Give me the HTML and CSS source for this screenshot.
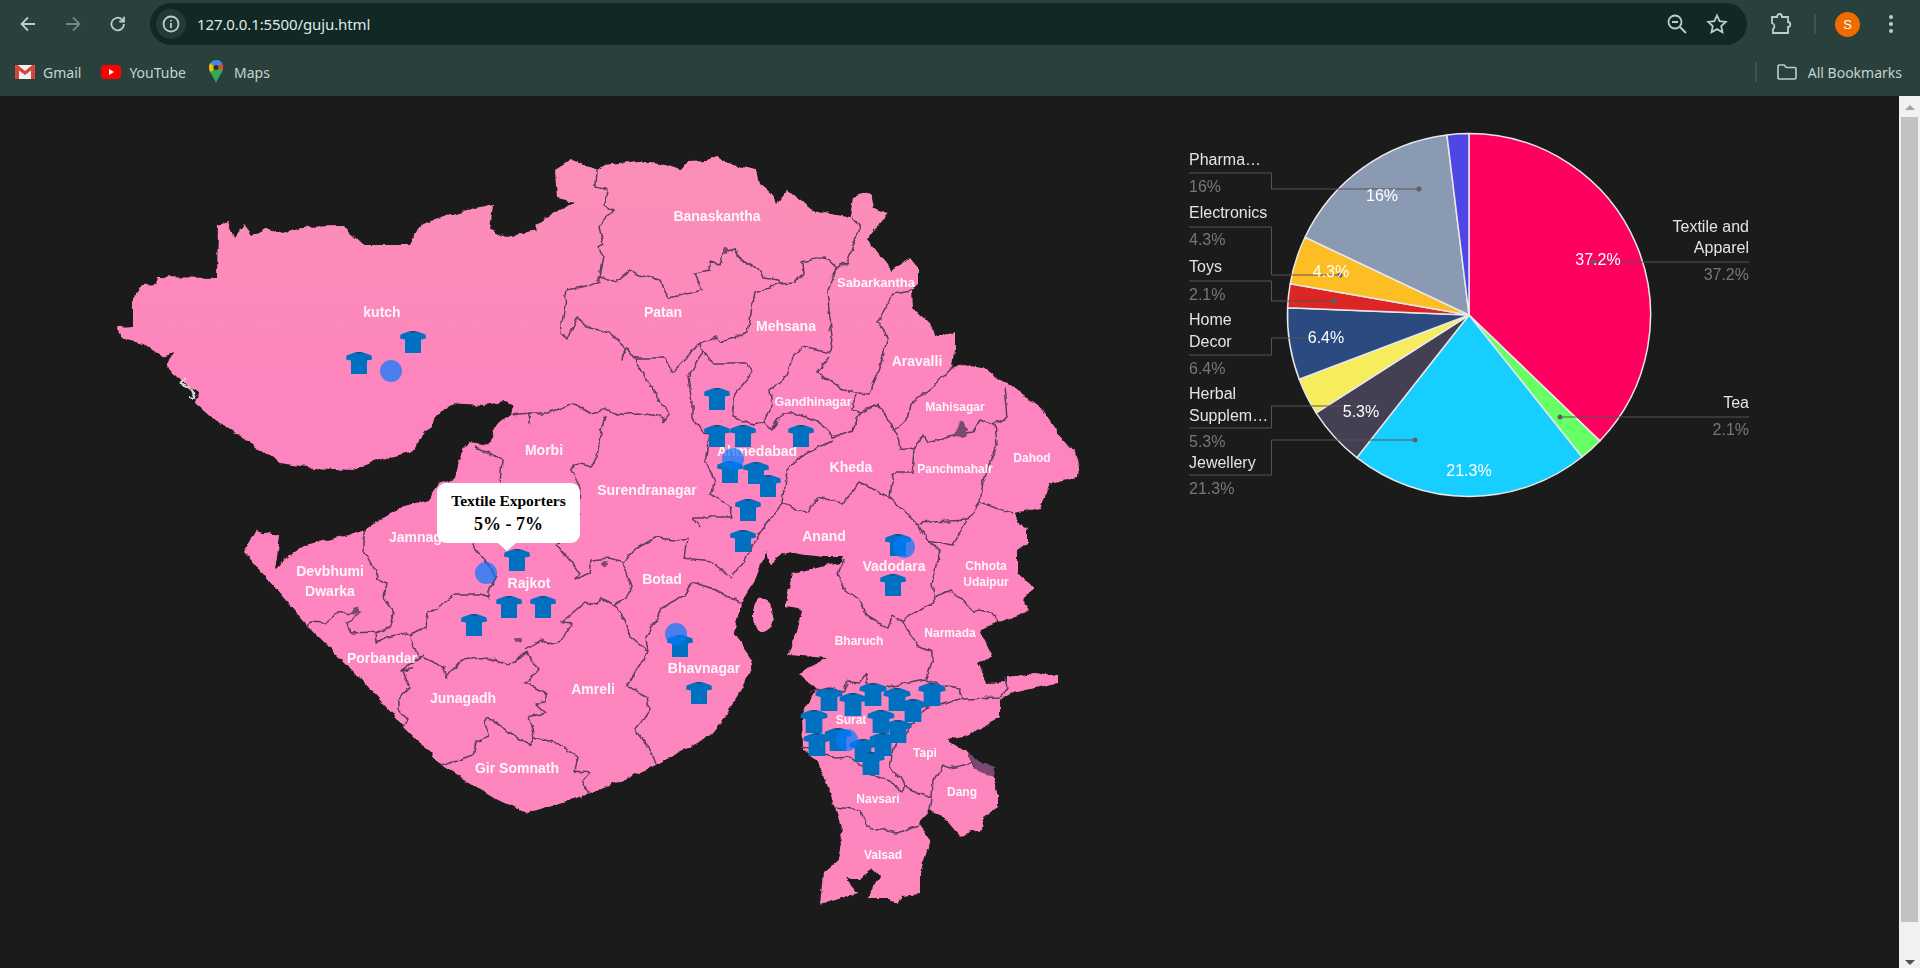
FILE: index.html
```html
<!DOCTYPE html>
<html lang="en">

<head>
    <meta charset="UTF-8">
    <meta name="viewport" content="width=device-width, initial-scale=1.0">
    <title>guju</title>
    <link rel="stylesheet" href="styles.css">
</head>

<body>
    <header class="browser">
        <div class="toolbar">
            <button class="navBtn"><svg width="20" height="20" viewBox="0 0 20 20"><path d="M17 10H4M10 3.500 3.500 10l6.500 6.500" /></svg></button>
            <button class="navBtn dim"><svg width="20" height="20" viewBox="0 0 20 20"><path d="M3 10h13M10 3.500l6.500 6.500-6.500 6.500" /></svg></button>
            <button class="navBtn"><svg width="20" height="20" viewBox="0 0 20 20"><path d="M16 10a6.300 6.300 0 1 1-1.900-4.500L16 7.300M16 2.800v4.700h-4.700" /></svg></button>
            <div class="urlBox">
                <span class="siteInfo"><svg width="20" height="20" viewBox="0 0 20 20"><circle cx="10" cy="10" r="7.500" /><path d="M10 9v5M10 6v1.600" /></svg></span>
                <span class="urlText">127.0.0.1:5500/guju.html</span>
                <span class="urlIcons">
                    <svg width="22" height="22" viewBox="0 0 22 22"><circle cx="9" cy="9" r="6.500" /><path d="M6 9h6M14 14l6 6" /></svg>
                    <svg width="22" height="22" viewBox="0 0 22 22"><path d="M11 2.500l2.600 5.700 6.200.7-4.600 4.200 1.300 6.100-5.500-3.100-5.500 3.100 1.300-6.100L2.200 8.900l6.200-.7z" /></svg>
                </span>
            </div>
            <svg class="extIcon" width="22" height="24" viewBox="0 0 22 24"><path d="M2 5h5c0-4 5-4 5 0h6v5c3 0 3 5 0 5v6H3v-4c2-1 2-5-1-6z" /></svg>
            <span class="toolSep"></span>
            <span class="avatar">S</span>
            <span class="menuDots"><i></i><i></i><i></i></span>
        </div>
        <nav class="bookmarks">
            <a class="mark"><svg class="logo" width="20" height="16" viewBox="0 0 20 16"><rect y="1" width="20" height="14" rx="1.500" fill="#f2f2f2" /><path d="M0 2.500v11.500c0 .6.400 1 1 1h3V6.500l6 4.500 6-4.500V15h3c.6 0 1-.4 1-1V2.500c0-1.500-1.800-2-3-1.200L10 7 3 1.300C1.800.5 0 1 0 2.500z" fill="#d6443a" /></svg>Gmail</a>
            <a class="mark"><svg class="logo" width="20" height="16" viewBox="0 0 20 16"><rect y="1" width="20" height="14" rx="4" fill="#f00" /><path d="M8 5l5 3-5 3z" fill="#fff" /></svg>YouTube</a>
            <a class="mark maps"><svg class="logo" width="14" height="24" viewBox="0 0 14 24"><path d="M7 23C5 17 0 13 0 7.500 0 3 3 0 7 0s7 3 7 7.500C14 13 9 17 7 23z" fill="#34a853" /><path d="M1 3.500 7 0c3 0 5 1 6 3L9.500 7 4 6z" fill="#4285f4" /><path d="M0 7.500C0 6 .4 4.800 1 3.500L5 6c-.6.800-.8 2.500 0 3.500L1.500 12C.5 10.500 0 9 0 7.500z" fill="#fbbc04" /><path d="M13 3c.7 1.300 1 3 1 4.500 0 1-.2 2-.6 3L9 7z" fill="#ea4335" /><circle cx="7" cy="7.500" r="2.500" fill="#3c2f10" /></svg>Maps</a>
            <span class="markSep"></span>
            <a class="mark allMarks"><svg width="20" height="16" viewBox="0 0 20 16"><path d="M1 14.500V2.300c0-.7.500-1.300 1.200-1.300h5l2 2.500h8.600c.7 0 1.200.600 1.200 1.300v9c0 .7-.5 1.200-1.200 1.200H2.200c-.7 0-1.200-.500-1.200-.500z" /></svg>All Bookmarks</a>
        </nav>
    </header>

    <main class="page">
        <div class="content">
            <!-- Gujarat district map -->
            <svg class="mapSvg" width="1150" height="872" viewBox="0 96 1150 872">
                <defs>
                    <linearGradient id="mapFill" gradientUnits="userSpaceOnUse" x1="600" y1="160" x2="600" y2="900">
                        <stop offset="0" stop-color="#fb8fb7" />
                        <stop offset="0.35" stop-color="#fe84bf" />
                        <stop offset="1" stop-color="#fd86bd" />
                    </linearGradient>
                    <filter id="rough" x="0" y="0" width="100%" height="100%" filterUnits="objectBoundingBox">
                        <feTurbulence type="fractalNoise" baseFrequency="0.09" numOctaves="3" seed="4" result="noise" />
                        <feDisplacementMap in="SourceGraphic" in2="noise" scale="6" xChannelSelector="R" yChannelSelector="G" />
                        <feGaussianBlur stdDeviation="0.35" />
                    </filter>
                    <symbol id="shirt" viewBox="0 0 26 22">
                        <path d="M8 .8C10 0 16 0 18 .8L25.500 3.500 26 7.500 21 8.500V22H5V8.500L0 7.500 .5 3.500z" fill="#0070c0" />
                        <path d="M9 .7c2.500 1 5.500 1 8 0-2.500-.5-5.500-.5-8 0z" fill="#123e6e" />
                    </symbol>
                </defs>

                <g class="roughMap">
                    <!-- Kutch + mainland outline -->
                    <path class="land" d="M117 328 133 327 133 297 142 286 154 285 157 277 217 278 218 225 228 222 234 238 244 224 253 236 267 228 282 233 301 227 343 226 363 245 410 245 421 224 467 210 493 204 490 230 506 237 538 230 536 225 555 212 575 202 557 198 555 170 571 160 597 170 605 165 636 161 660 163 680 170 688 161 707 160 717 156 733 165 757 170 760 183 772 193 777 203 787 190 812 210 850 218 853 197 870 192 873 208 888 213 868 240 892 270 910 257 918 267 918 285 912 290 913 308 933 327 935 337 955 332 955 350 953 367 963 365 983 368 1000 380 1008 383 1043 410 1063 440 1080 460 1077 477 1050 483 1040 507 1015 513 1017 520 1027 530 1027 543 1017 550 1017 573 1035 588 1023 600 1030 610 998 622 980 630 993 657 977 663 987 683 1007 682 1007 677 1033 673 1057 675 1057 683 1013 693 1000 700 1000 717 977 730 963 737 947 740 968 753 973 767 993 773 998 793 998 807 983 817 982 830 960 835 947 820 930 810 918 823 930 840 920 873 920 893 902 895 897 905 888 898 867 898 880 877 872 868 860 880 845 878 857 893 820 905 823 873 838 860 843 833 835 807 817 760 803 750 802 713 817 690 800 673 810 667 828 658 788 655 803 610 785 607 792 573 840 563 843 557 823 557 783 552 770 565 766 552 755 580 741 603 734 633 753 660 744 687 723 720 709 737 659 763 630 777 587 795 526 813 498 800 444 767 405 728 362 680 309 627 244 552 257 530 280 537 275 570 289 555 305 545 348 535 362 530 401 508 430 500 437 483 455 478 462 450 470 442 488 445 498 423 511 415 513 405 504 402 483 405 450 403 437 417 410 452 379 460 353 470 314 468 280 463 253 445 215 420 196 403 198 393 180 380 167 367 173 353 163 357 142 343 123 338z" />
                    <path class="land" d="M760 599C770 597 775 607 773 618 772 628 765 635 758 631 752 625 750 605 760 599z" />

                    <!-- district borders -->
                    <g class="borders">
                        <path d="M597 170 596 187 607 190 605 205 613 210 599 227 603 243 598 247 603 257 599 277 617 283 628 270 640 275 660 280 668 298 702 290 695 273 710 270 710 262 720 265 723 253 735 250 738 258 760 270 763 278 778 280 780 284 795 283 803 273 802 262 825 257 837 268 847 263 860 227 852 218" />
                        <path d="M599 277 599 283 567 290 563 317 561 333 567 340 578 317 586 327 609 332 624 347 622 360 626 347 634 358 665 358 673 372 700 343 717 337 720 342 748 332 752 307 755 293 780 284" />
                        <path d="M635 357 645 377 655 393 660 403 670 413 663 422 663 417 640 413 617 415 605 410 590 413 573 403 548 413 530 413 530 423 529 413 511 415" />
                        <path d="M700 343 702 353 708 357 713 363 748 363 752 372 735 393 732 417 753 425 763 423" />
                        <path d="M702 353 688 377 692 403 692 417 703 432 710 433 705 460 715 483 710 493 730 507 733 517 693 517 700 528" />
                        <path d="M837 268 827 290 832 337 830 353 802 347 793 357 785 378 770 390 772 407 763 423 770 430 783 413 793 413 820 423 833 437 853 430 860 413 853 410 855 392 843 390 817 373 830 357" />
                        <path d="M913 290 893 293 877 322 888 337 883 357 877 375 870 393 855 392" />
                        <path d="M860 413 878 405 895 430 897 433 900 448 915 450 923 435 927 442 953 435 973 432 980 420 993 425 1008 417 1005 387" />
                        <path d="M953 367 933 387 910 405 907 420 895 430" />
                        <path d="M995 425 997 443 983 483 980 503 1013 513" />
                        <path d="M915 450 913 473 893 473 890 497 860 483 843 503 817 497 807 513 790 508 783 503 787 470 800 457 833 440" />
                        <path d="M783 503 762 528 745 560 733 575" />
                        <path d="M890 497 917 523 967 520 980 503" />
                        <path d="M917 523 927 540 940 550 932 583 935 603 910 615 903 622 893 615 888 628 867 615 860 600 842 587 838 573 843 560" />
                        <path d="M967 520 953 545 927 540" />
                        <path d="M935 598 950 590 960 598 973 610 990 613 998 622" />
                        <path d="M903 622 907 630 920 647 932 652 932 663 925 680 940 685 960 688 963 698 940 705 927 707 893 747 890 767 903 780 905 787 920 793 932 797 930 810" />
                        <path d="M963 699 1000 698 1007 688 1005 678" />
                        <path d="M925 680 887 687 867 683 867 673 860 683 848 682 843 692 830 688 810 692" />
                        <path d="M802 747 823 755 837 758 850 757 872 775 893 782 902 793 905 787" />
                        <path d="M932 797 933 780 942 765 950 768 973 763" />
                        <path d="M835 807 860 810 868 827 897 833 918 825" />
                        <!-- saurashtra -->
                        <path d="M475 447 502 460 500 483 473 545 487 563 496 577 489 587 489 598 480 595 455 595 437 608 428 613 426 627 410 635 407 633 387 637 376 643 375 632 350 633 346 623 362 612 337 613 325 623 310 622 308 628" />
                        <path d="M364 530 364 550 375 570 378 580 387 583 384 597 394 613 391 627 376 633" />
                        <path d="M605 417 601 430 597 457 592 467 575 463 571 470 580 487 578 517 557 545 567 557 580 573 575 580 589 573 591 560 609 558 623 562 634 550 655 538 676 540 687 538 684 558 694 560 712 562 732 578" />
                        <path d="M623 563 632 587 626 598 614 605 601 597 598 605 585 602 562 622 571 623 562 640 551 645 541 640 526 650" />
                        <path d="M410 637 418 657 425 658 444 667 446 678 462 660 487 657 509 665 519 657 528 652" />
                        <path d="M614 605 625 620 630 637 648 652 637 670 628 685 634 690 648 697 650 710 635 730 650 750 655 763" />
                        <path d="M741 603 709 587 692 582 684 595 662 607 655 623 646 637 648 653" />
                        <path d="M526 652 539 670 526 682 546 693 546 702 535 703 546 713 528 717 534 737 530 745 517 737 487 718 484 723 489 737 476 742 473 755 441 765" />
                        <path d="M534 737 557 743 578 757 575 770 589 772 582 780 589 795" />
                        <path d="M425 655 400 670 412 668 403 670 410 688 398 700 398 710 407 720 403 728" />
                    </g>

                    <!-- small water patches on the map image -->
                    <path class="patch" d="M953 437 960 421 968 428 966 438z" />
                    <path class="patch" d="M968 752 980 762 994 767 993 776 978 771 972 764z" />
                    <circle class="patch" cx="356" cy="610" r="4" />
                    <circle class="patch" cx="605" cy="564" r="3" />
                    <circle class="patch" cx="519" cy="640" r="3" />
                    <circle class="patch" cx="726" cy="251" r="3" />
                    <path class="paleLine" d="M186 379 180 384 190 388 194 397 188 396" />
                </g>

                <g class="districtNames">
                    <text x="382" y="317">kutch</text>
                    <text x="717" y="221">Banaskantha</text>
                    <text x="663" y="317">Patan</text>
                    <text x="876" y="287" class="sm">Sabarkantha</text>
                    <text x="786" y="331">Mehsana</text>
                    <text x="917" y="366">Aravalli</text>
                    <text x="813" y="406" class="gn">Gandhinagar</text>
                    <text x="955" y="411" class="xs">Mahisagar</text>
                    <text x="757" y="456">Ahmedabad</text>
                    <text x="851" y="472">Kheda</text>
                    <text x="955" y="473" class="xs">Panchmahalr</text>
                    <text x="1032" y="462" class="xs">Dahod</text>
                    <text x="647" y="495">Surendranagar</text>
                    <text x="544" y="455">Morbi</text>
                    <text x="422" y="542">Jamnagar</text>
                    <text x="330" y="576">Devbhumi</text>
                    <text x="330" y="596">Dwarka</text>
                    <text x="529" y="588">Rajkot</text>
                    <text x="662" y="584">Botad</text>
                    <text x="382" y="663">Porbandar</text>
                    <text x="463" y="703">Junagadh</text>
                    <text x="593" y="694">Amreli</text>
                    <text x="704" y="673">Bhavnagar</text>
                    <text x="517" y="773">Gir Somnath</text>
                    <text x="824" y="541">Anand</text>
                    <text x="894" y="571">Vadodara</text>
                    <text x="986" y="570" class="xs">Chhota</text>
                    <text x="986" y="586" class="xs">Udaipur</text>
                    <text x="859" y="645" class="xs">Bharuch</text>
                    <text x="950" y="637" class="xs">Narmada</text>
                    <text x="851" y="724" class="xs">Surat</text>
                    <text x="925" y="757" class="xs">Tapi</text>
                    <text x="878" y="803" class="xs">Navsari</text>
                    <text x="962" y="796" class="xs">Dang</text>
                    <text x="883" y="859" class="xs">Valsad</text>
                </g>

                <use href="#shirt" x="346" y="352" width="26" height="22" />
                <use href="#shirt" x="400" y="331" width="26" height="22" />
                <use href="#shirt" x="704" y="388" width="26" height="22" />
                <use href="#shirt" x="704" y="425" width="26" height="22" />
                <use href="#shirt" x="730" y="425" width="26" height="22" />
                <use href="#shirt" x="788" y="425" width="26" height="22" />
                <use href="#shirt" x="717" y="461" width="26" height="22" />
                <use href="#shirt" x="743" y="462" width="26" height="22" />
                <use href="#shirt" x="755" y="475" width="26" height="22" />
                <use href="#shirt" x="735" y="499" width="26" height="22" />
                <use href="#shirt" x="730" y="530" width="26" height="22" />
                <use href="#shirt" x="504" y="549" width="26" height="22" />
                <use href="#shirt" x="496" y="596" width="26" height="22" />
                <use href="#shirt" x="530" y="596" width="26" height="22" />
                <use href="#shirt" x="461" y="614" width="26" height="22" />
                <use href="#shirt" x="667" y="635" width="26" height="22" />
                <use href="#shirt" x="686" y="682" width="26" height="22" />
                <use href="#shirt" x="880" y="574" width="26" height="22" />
                <use href="#shirt" x="885" y="534" width="26" height="22" />
                <use href="#shirt" x="815" y="688" width="28" height="23" />
                <use href="#shirt" x="839" y="693" width="28" height="23" />
                <use href="#shirt" x="859" y="683" width="28" height="23" />
                <use href="#shirt" x="883" y="688" width="28" height="23" />
                <use href="#shirt" x="918" y="683" width="28" height="23" />
                <use href="#shirt" x="899" y="699" width="28" height="23" />
                <use href="#shirt" x="800" y="710" width="28" height="23" />
                <use href="#shirt" x="867" y="710" width="28" height="23" />
                <use href="#shirt" x="884" y="720" width="28" height="23" />
                <use href="#shirt" x="803" y="733" width="28" height="23" />
                <use href="#shirt" x="824" y="728" width="28" height="23" />
                <use href="#shirt" x="869" y="733" width="28" height="23" />
                <use href="#shirt" x="849" y="739" width="28" height="23" />
                <use href="#shirt" x="857" y="752" width="28" height="23" />

                <g class="dots">
                    <circle cx="391" cy="371" r="11" />
                    <circle cx="733" cy="459" r="11" />
                    <circle cx="486" cy="573" r="11" />
                    <circle cx="676" cy="634" r="11" />
                    <circle cx="904" cy="547" r="11" />
                    <circle cx="847" cy="740" r="11" />
                </g>
            </svg>

            <div class="tip">
                <div class="tipTitle">Textile Exporters</div>
                <div class="tipRange">5% - 7%</div>
            </div>

            <!-- export share pie -->
            <svg class="pieSvg" width="749" height="872" viewBox="1150 96 749 872">
                <g class="slices">
                    <path fill="#ff0060" d="M1469 315V133.500A181.500 181.500 0 0 1 1599.800 440.900z" />
                    <path fill="#66ff66" d="M1469 315 1599.800 440.900A181.500 181.500 0 0 1 1582 457z" />
                    <path fill="#16ceff" d="M1469 315 1582 457A181.500 181.500 0 0 1 1356.800 457.600z" />
                    <path fill="#443f52" d="M1469 315 1356.800 457.600A181.500 181.500 0 0 1 1316.100 412.800z" />
                    <path fill="#f7ec5c" d="M1469 315 1316.100 412.800A181.500 181.500 0 0 1 1299.200 379.200z" />
                    <path fill="#2b4a7f" d="M1469 315 1299.200 379.200A181.500 181.500 0 0 1 1287.600 307.700z" />
                    <path fill="#dc2626" d="M1469 315 1287.600 307.700A181.500 181.500 0 0 1 1290.200 283.800z" />
                    <path fill="#fdbd24" d="M1469 315 1290.200 283.800A181.500 181.500 0 0 1 1305 237.200z" />
                    <path fill="#8a9ab3" d="M1469 315 1305 237.200A181.500 181.500 0 0 1 1446.900 134.900z" />
                    <path fill="#4f46e5" d="M1469 315 1446.900 134.900A181.500 181.500 0 0 1 1469 133.500z" />
                </g>
                <g class="leaders">
                    <path d="M1189 173H1271.500V189H1419" />
                    <path d="M1189 227H1271.500V275H1340" />
                    <path d="M1189 281H1271.500V301H1334" />
                    <path d="M1189 355H1271.500V338H1308" />
                    <path d="M1189 428H1271.500V406H1357" />
                    <path d="M1189 475H1271.500V440H1415" />
                    <path d="M1749 262H1594" />
                    <path d="M1749 417H1560" />
                </g>
                <g class="leaderDots">
                    <circle cx="1419" cy="189" r="2.500" />
                    <circle cx="1340" cy="275" r="2.500" />
                    <circle cx="1334" cy="301" r="2.500" />
                    <circle cx="1594" cy="262" r="2.500" />
                    <circle cx="1560" cy="417" r="2.500" />
                    <circle cx="1415" cy="440" r="2.500" />
                </g>
                <g class="sliceText">
                    <text x="1598" y="265">37.2%</text>
                    <text x="1382" y="201">16%</text>
                    <text x="1331" y="277">4.3%</text>
                    <text x="1326" y="343">6.4%</text>
                    <text x="1361" y="417">5.3%</text>
                    <text x="1469" y="476">21.3%</text>
                </g>
                <g class="legendName">
                    <text x="1189" y="165">Pharma…</text>
                    <text x="1189" y="218">Electronics</text>
                    <text x="1189" y="272">Toys</text>
                    <text x="1189" y="325">Home</text>
                    <text x="1189" y="347">Decor</text>
                    <text x="1189" y="399">Herbal</text>
                    <text x="1189" y="421">Supplem…</text>
                    <text x="1189" y="468">Jewellery</text>
                </g>
                <g class="legendValue">
                    <text x="1189" y="192">16%</text>
                    <text x="1189" y="245">4.3%</text>
                    <text x="1189" y="300">2.1%</text>
                    <text x="1189" y="374">6.4%</text>
                    <text x="1189" y="447">5.3%</text>
                    <text x="1189" y="494">21.3%</text>
                </g>
                <g class="legendName endSide">
                    <text x="1749" y="232">Textile and</text>
                    <text x="1749" y="253">Apparel</text>
                    <text x="1749" y="408">Tea</text>
                </g>
                <g class="legendValue endSide">
                    <text x="1749" y="280">37.2%</text>
                    <text x="1749" y="435">2.1%</text>
                </g>
            </svg>
        </div>

        <div class="scrollbar">
            <span class="arrowUp"></span>
            <span class="thumb"></span>
            <span class="arrowDown"></span>
        </div>
    </main>
</body>

</html>
```

FILE: styles.css
```css
body {
    margin: 0;
    height: 968px;
    overflow: hidden;
    display: flex;
    flex-direction: column;
    background-color: #1b1b1b;
    font-family: "Liberation Sans", Arial, sans-serif;
}

/* browser frame */
.browser {
    height: 96px;
    flex: none;
    background-color: #2a403d;
    color: #c5d3d0;
}

.browser svg {
    fill: none;
    stroke: #bccdca;
    stroke-width: 1.8;
    display: block;
}

.toolbar {
    height: 48px;
    display: flex;
    align-items: center;
}

.navBtn {
    width: 45px;
    height: 36px;
    padding: 0;
    flex: none;
    display: flex;
    align-items: center;
    justify-content: center;
    background: none;
    border: none;
    margin-top: -1px;
}

.navBtn:first-child {
    margin-left: 5px;
}

.navBtn.dim svg {
    stroke: #72857f;
}

.urlBox {
    width: 1597px;
    height: 42px;
    margin-left: 10px;
    display: flex;
    align-items: center;
    flex: none;
    background-color: #122825;
    border-radius: 21px;
}

.siteInfo {
    width: 30px;
    height: 30px;
    margin-left: 6px;
    display: flex;
    align-items: center;
    justify-content: center;
    background-color: #243a37;
    border-radius: 50%;
}

.urlText {
    margin-left: 11px;
    font-family: "Noto Sans", sans-serif;
    font-size: 15px;
    color: #dfe9e7;
    letter-spacing: -0.1px;
}

.urlIcons {
    margin-left: auto;
    margin-right: 19px;
    display: flex;
    gap: 18px;
}

.extIcon {
    margin-left: 23px;
    flex: none;
}

.toolSep {
    width: 2px;
    height: 20px;
    margin-left: 22px;
    background-color: #3e5552;
    flex: none;
}

.avatar {
    width: 25px;
    height: 25px;
    margin-left: 19px;
    flex: none;
    display: flex;
    align-items: center;
    justify-content: center;
    background-color: #f06c00;
    border-radius: 50%;
    color: #fff;
    font-size: 13px;
}

.menuDots {
    margin-left: 29px;
    display: flex;
    flex-direction: column;
    gap: 3px;
}

.menuDots i {
    width: 4px;
    height: 4px;
    background-color: #bccdca;
    border-radius: 50%;
}

.bookmarks {
    height: 48px;
    display: flex;
    align-items: center;
    font-family: "Noto Sans", sans-serif;
    font-size: 14px;
    padding-left: 15px;
}

.mark {
    display: flex;
    align-items: center;
    gap: 8px;
    margin-right: 20px;
}

.mark.maps {
    margin-left: 3px;
    gap: 11px;
}

.browser svg.logo {
    stroke: none;
}

.browser .allMarks svg {
    stroke-width: 1.6;
}

.markSep {
    width: 2px;
    height: 20px;
    margin-left: auto;
    margin-right: 20px;
    background-color: #3e5552;
}

.mark.allMarks {
    gap: 11px;
    margin-right: 18px;
}

/* page */
.page {
    flex: 1;
    display: flex;
    min-height: 0;
}

.content {
    position: relative;
    flex: 1;
    display: flex;
}

.mapSvg,
.pieSvg {
    display: block;
    flex: none;
}

.roughMap {
    filter: url(#rough);
}

.land {
    fill: url(#mapFill);
}

.borders path {
    fill: none;
    stroke: #5b3d5f;
    stroke-width: 1.5;
    stroke-linejoin: round;
}

.patch {
    fill: #7a4a72;
}

.paleLine {
    fill: none;
    stroke: #d9d6dc;
    stroke-width: 2;
}

.districtNames text {
    fill: #fff;
    font-size: 14px;
    font-weight: bold;
    text-anchor: middle;
    opacity: 0.93;
    filter: blur(0.3px);
}

.districtNames .sm {
    font-size: 13px;
}

.districtNames .gn {
    font-size: 12.5px;
}

.districtNames .xs {
    font-size: 12px;
}

.dots circle {
    fill: rgb(0, 122, 255);
    opacity: 0.7;
}

/* popup over the Rajkot marker */
.tip {
    position: absolute;
    left: 437px;
    top: 387px;
    width: 143px;
    height: 60px;
    box-sizing: border-box;
    padding-top: 8px;
    background-color: #fff;
    border-radius: 9px;
    color: #000;
    font-family: "Liberation Serif", "Times New Roman", serif;
    font-weight: bold;
    text-align: center;
}

.tip::after {
    content: "";
    position: absolute;
    left: 61px;
    bottom: -8px;
    border-left: 9px solid transparent;
    border-right: 9px solid transparent;
    border-top: 8px solid #fff;
}

.tipTitle {
    font-size: 15.5px;
    line-height: 20px;
}

.tipRange {
    font-size: 18px;
    line-height: 26px;
}

.slices path {
    stroke: #e8e8e8;
    stroke-width: 1.5;
    stroke-linejoin: round;
}

.leaders path {
    fill: none;
    stroke: #555;
    stroke-width: 1;
}

.leaderDots circle {
    fill: #5f5f5f;
}

.sliceText text {
    fill: #fff;
    font-size: 16px;
    text-anchor: middle;
    filter: blur(0.25px);
}

.legendName text {
    fill: #e4e4e4;
    font-size: 16px;
    filter: blur(0.25px);
}

.legendValue text {
    fill: #777;
    font-size: 16px;
    filter: blur(0.25px);
}

.endSide text {
    text-anchor: end;
}

.scrollbar {
    width: 21px;
    flex: none;
    display: flex;
    flex-direction: column;
    align-items: center;
    background-color: #f1f1f1;
}

.arrowUp {
    margin-top: 9px;
    border-left: 5px solid transparent;
    border-right: 5px solid transparent;
    border-bottom: 5px solid #a3a3a3;
}

.thumb {
    width: 17px;
    height: 805px;
    margin-top: 7px;
    background-color: #c1c1c1;
}

.arrowDown {
    margin-top: auto;
    margin-bottom: 3px;
    border-left: 5px solid transparent;
    border-right: 5px solid transparent;
    border-top: 5px solid #505050;
}
```
